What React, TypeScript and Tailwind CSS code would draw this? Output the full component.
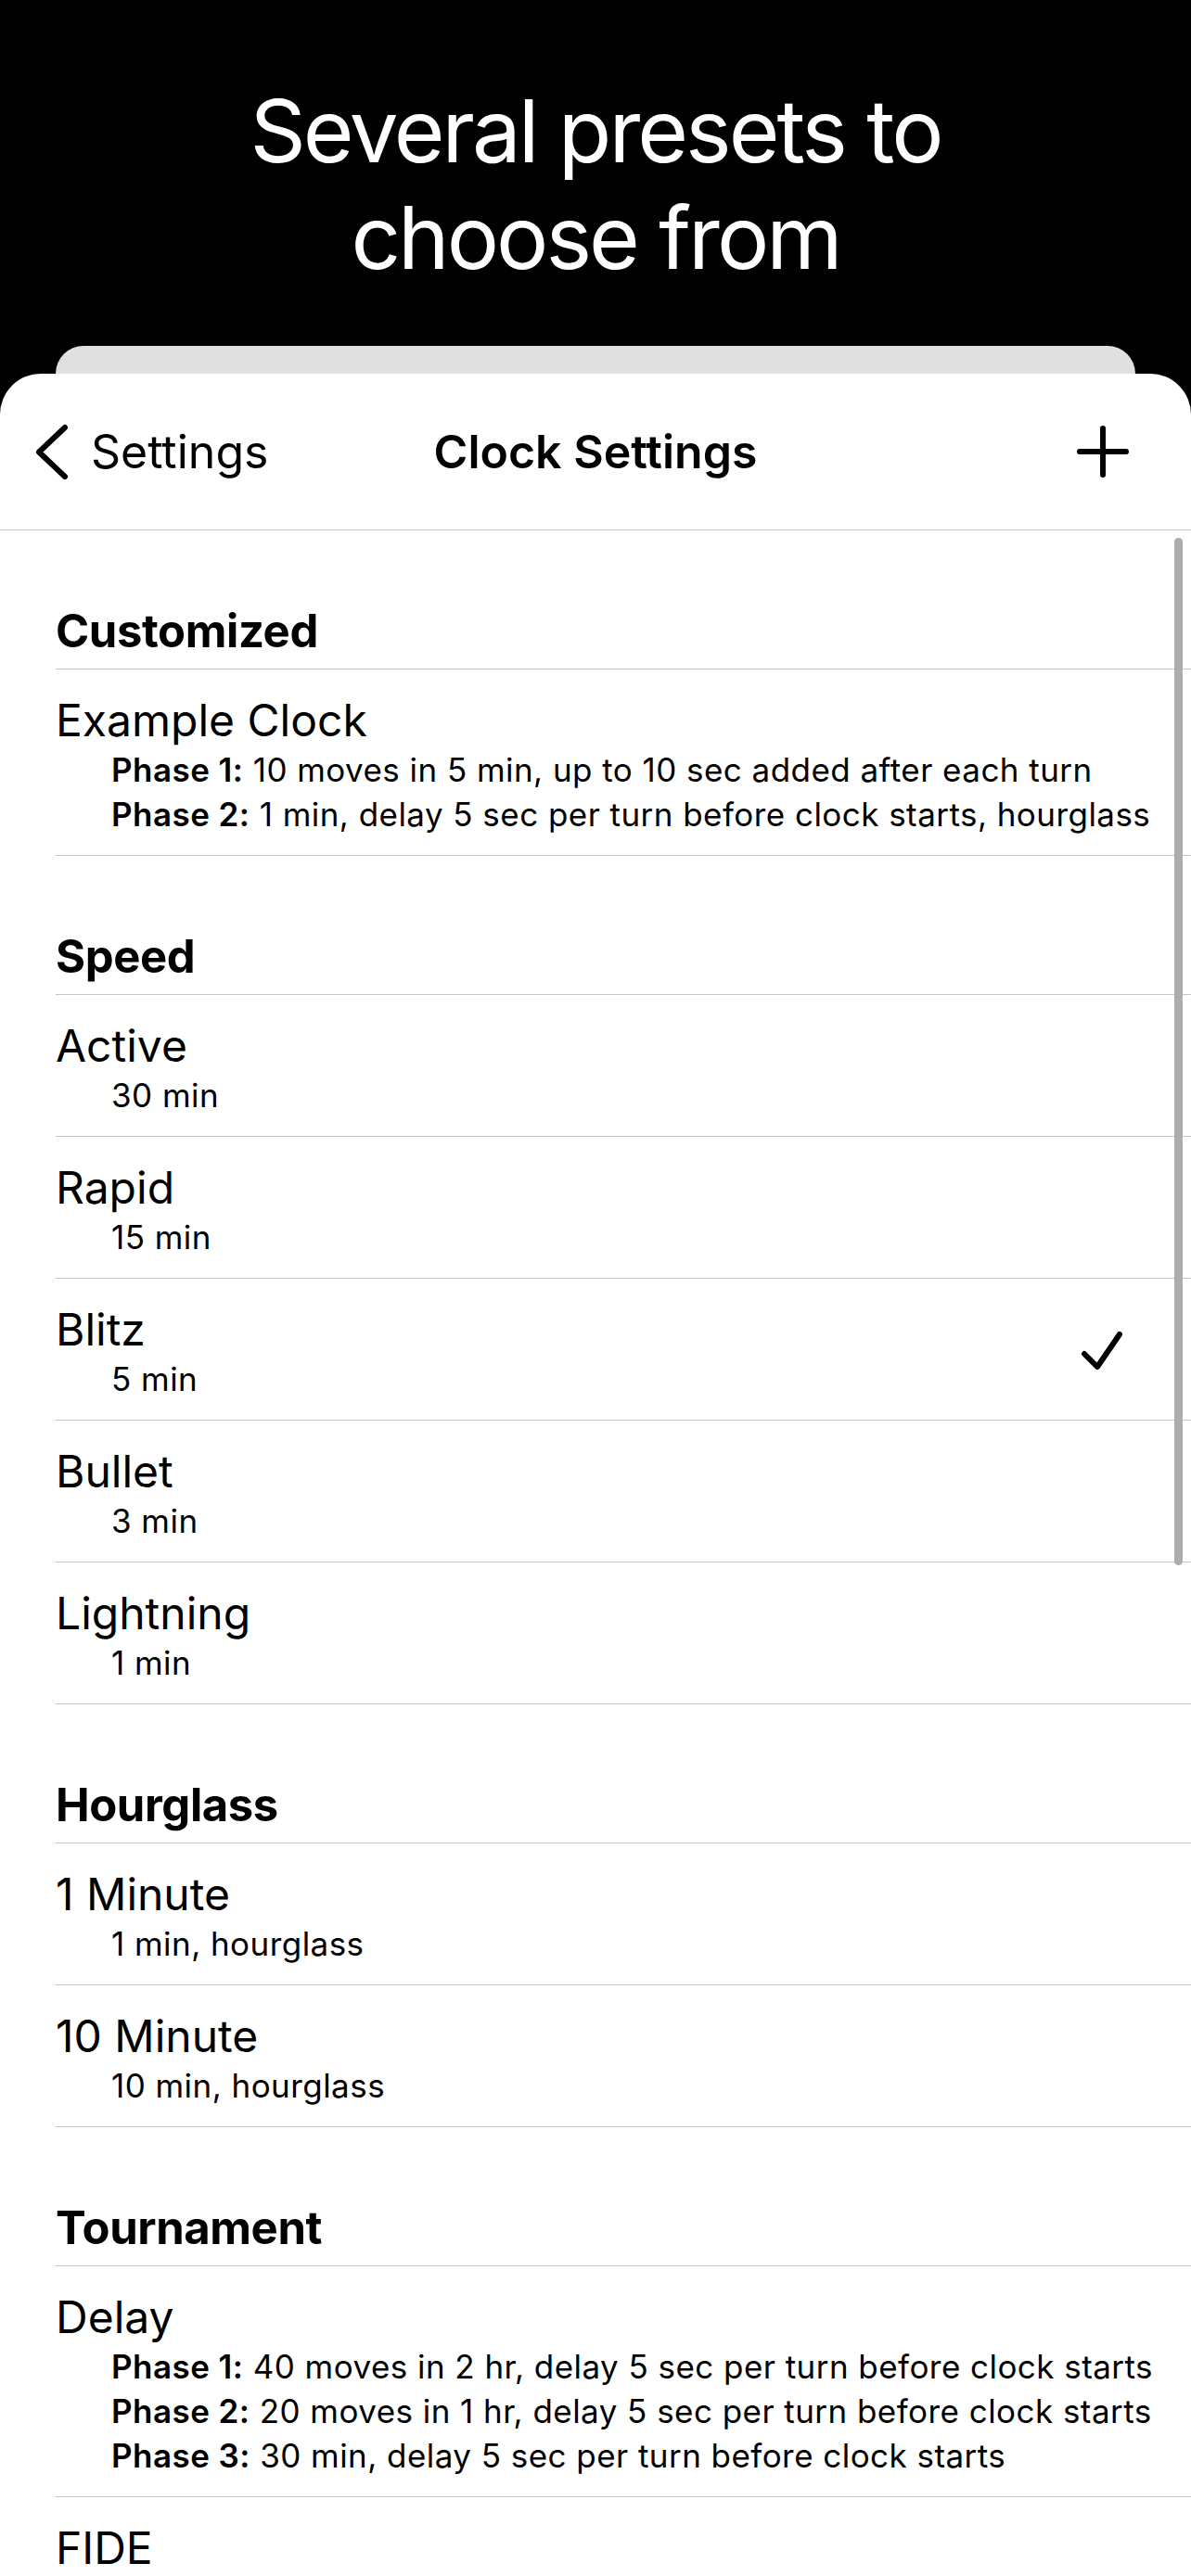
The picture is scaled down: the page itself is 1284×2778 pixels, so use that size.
import React from "react";

type Sub = { b?: string; t: string };
type Row = { title: string; subs: Sub[]; checked?: boolean };
type Section = { header: string; rows: Row[] };

const sections: Section[] = [
  {
    header: "Customized",
    rows: [
      {
        title: "Example Clock",
        subs: [
          { b: "Phase 1:", t: " 10 moves in 5 min, up to 10 sec added after each turn" },
          { b: "Phase 2:", t: " 1 min, delay 5 sec per turn before clock starts, hourglass" },
        ],
      },
    ],
  },
  {
    header: "Speed",
    rows: [
      { title: "Active", subs: [{ t: "30 min" }] },
      { title: "Rapid", subs: [{ t: "15 min" }] },
      { title: "Blitz", subs: [{ t: "5 min" }], checked: true },
      { title: "Bullet", subs: [{ t: "3 min" }] },
      { title: "Lightning", subs: [{ t: "1 min" }] },
    ],
  },
  {
    header: "Hourglass",
    rows: [
      { title: "1 Minute", subs: [{ t: "1 min, hourglass" }] },
      { title: "10 Minute", subs: [{ t: "10 min, hourglass" }] },
    ],
  },
  {
    header: "Tournament",
    rows: [
      {
        title: "Delay",
        subs: [
          { b: "Phase 1:", t: " 40 moves in 2 hr, delay 5 sec per turn before clock starts" },
          { b: "Phase 2:", t: " 20 moves in 1 hr, delay 5 sec per turn before clock starts" },
          { b: "Phase 3:", t: " 30 min, delay 5 sec per turn before clock starts" },
        ],
      },
      {
        title: "FIDE",
        subs: [
          { b: "Phase 1:", t: " 40 moves in 90 min, up to 30 sec added after each turn" },
          { b: "Phase 2:", t: " 30 min, up to 30 sec added after each turn" },
        ],
      },
    ],
  },
];

function Check() {
  return (
    <svg width="48" height="48" viewBox="0 0 48 48" fill="none">
      <path d="M5 26 L19 40 L43 5" stroke="#000" strokeWidth="6" strokeLinecap="round" strokeLinejoin="round" />
    </svg>
  );
}

export default function App() {
  return (
    <div className="relative w-[1284px] h-[2778px] overflow-hidden bg-black font-['Inter','Liberation_Sans',sans-serif] text-black">
      <div className="pt-[84px] text-center text-white text-[94px] leading-[115px] tracking-[-3px]">
        <div>Several presets to</div>
        <div>choose from</div>
      </div>
      <div className="mt-[59px] mx-[60px] w-[1164px] h-[30px] rounded-t-[30px] bg-[#e0e0e0]" />
      <div className="bg-white rounded-t-[44px] min-h-[2400px]">
        <div className="relative h-[169px] flex items-center border-b border-[#c4c4c6]">
          <div className="flex items-center pl-[38px]">
            <svg width="36" height="60" viewBox="0 0 36 60" fill="none">
              <path d="M32 4 L4 30.5 L32 57" stroke="#000" strokeWidth="6" strokeLinecap="round" strokeLinejoin="round" />
            </svg>
            <span className="ml-[24px] text-[50px] leading-[60px]">Settings</span>
          </div>
          <div className="absolute left-0 right-0 text-center text-[50px] leading-[60px] font-semibold pointer-events-none">
            Clock Settings
          </div>
          <div className="ml-auto mr-[67px]">
            <svg width="56" height="56" viewBox="0 0 56 56" fill="none">
              <path d="M28 3 V53 M3 28 H53" stroke="#000" strokeWidth="6" strokeLinecap="round" />
            </svg>
          </div>
        </div>
        <div>
          {sections.map((s) => (
            <div key={s.header}>
              <div className="ml-[60px] pt-[79px] pb-[10px] border-b border-[#c4c4c6] text-[49px] leading-[60px] font-bold tracking-[-0.4px]">
                {s.header}
              </div>
              {s.rows.map((r) => (
                <div key={r.title} className="ml-[60px] pt-[26px] pb-[20px] pr-[72px] border-b border-[#c4c4c6] flex items-center">
                  <div className="flex-1">
                    <div className="text-[48px] leading-[58px]">{r.title}</div>
                    {r.subs.map((sb, i) => (
                      <div key={i} className="pl-[60px] text-[35px] leading-[48px] tracking-[0.45px] whitespace-nowrap">
                        {sb.b && <span className="font-semibold">{sb.b}</span>}
                        {sb.t}
                      </div>
                    ))}
                  </div>
                  {r.checked && <Check />}
                </div>
              ))}
            </div>
          ))}
        </div>
      </div>
      <div className="absolute left-[1266px] top-[580px] w-[9px] h-[1108px] rounded-full bg-[#acacac]" />
    </div>
  );
}
